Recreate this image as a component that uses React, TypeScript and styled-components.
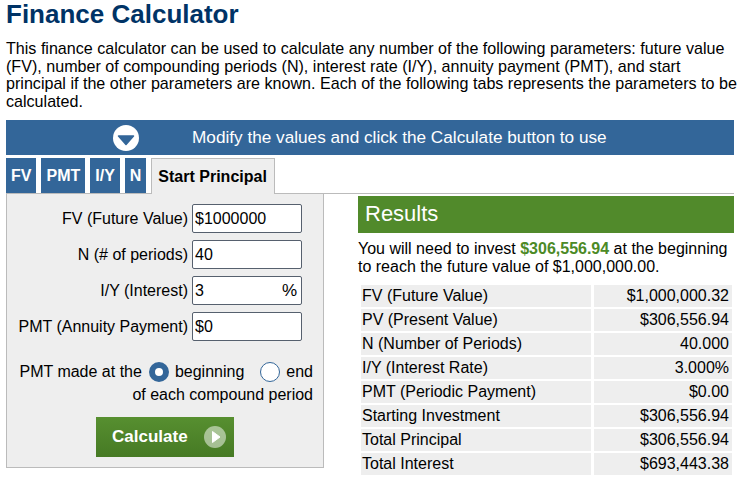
import React from 'react';
import styled, { createGlobalStyle, css } from 'styled-components';

const GlobalStyle = createGlobalStyle`
  html, body { margin: 0; padding: 0; background: #fff; }
  body { font-family: "Liberation Sans", Arial, sans-serif; color: #000; }
  * { box-sizing: border-box; }
`;

const Page = styled.div`
  width: 734px;
  padding-left: 6px;
`;

const Title = styled.h1`
  margin: 0;
  font-size: 26px;
  line-height: 29px;
  font-weight: bold;
  color: #003366;
`;

const Intro = styled.p`
  margin: 11px 0 0;
  font-size: 16.1px;
  line-height: 17.6px;
  white-space: nowrap;
`;

const Banner = styled.div`
  margin-top: 10px;
  height: 35px;
  background: #336699;
  display: flex;
  align-items: center;
  padding-left: 107px;
  gap: 53px;
  color: #fff;
  font-size: 17.2px;
`;

const TabRow = styled.div`
  margin-top: 3px;
  display: flex;
  align-items: flex-start;
  gap: 5px;
  height: 36px;
  border-bottom: 1px solid #bbb;
`;

const Tab = styled.div<{ $active?: boolean }>`
  height: 35px;
  line-height: 35px;
  padding: 0 5px;
  font-size: 16px;
  font-weight: bold;
  background: #336699;
  color: #fff;
  ${p =>
    p.$active &&
    css`
      background: #eee;
      color: #000;
      height: 36px;
      line-height: 35px;
      padding: 0 7px 0 6px;
      border: 1px solid #bbb;
      border-bottom: none;
      position: relative;
      z-index: 1;
    `}
`;

const Body = styled.div`
  display: flex;
  align-items: flex-start;
  gap: 34px;
`;

const Panel = styled.div`
  width: 318px;
  background: #eee;
  border: 1px solid #bbb;
  border-top: none;
  padding: 10px 10px 10px 0;
  font-size: 16px;
`;

const FormGrid = styled.div`
  display: grid;
  grid-template-columns: 181px 110px;
  column-gap: 4px;
  row-gap: 7px;
  align-items: center;
`;

const Label = styled.label`
  text-align: right;
  white-space: nowrap;
`;

const Field = styled.div`
  height: 29px;
  background: #fff;
  border: 1px solid #56606e;
  border-radius: 2px;
  display: flex;
  align-items: center;
  padding: 0 4px 0 2px;
`;

const Input = styled.input`
  flex: 1;
  min-width: 0;
  border: none;
  outline: none;
  padding: 0;
  background: transparent;
  font: 16px "Liberation Sans", Arial, sans-serif;
  color: #000;
`;

const Suffix = styled.span`
  font-size: 17px;
`;

const RadioBlock = styled.div`
  margin-top: 19px;
  line-height: 23px;
  text-align: right;
`;

const RadioLine = styled.div`
  display: flex;
  justify-content: flex-end;
  align-items: center;
  height: 23px;
`;

const Radio = styled.span<{ $checked?: boolean; $wide?: boolean }>`
  display: inline-block;
  width: 20px;
  height: 20px;
  border-radius: 50%;
  background: #fff;
  border: ${p => (p.$checked ? '6px solid #336699' : '1.5px solid #336699')};
  margin: 1px 6px 0 ${p => (p.$wide ? '16px' : '7px')};
`;

const ButtonWrap = styled.div`
  margin-top: 11px;
  display: flex;
  justify-content: center;
  padding-left: 10px;
`;

const CalcButton = styled.button`
  width: 138px;
  height: 40px;
  border: none;
  background: linear-gradient(#578f30, #467a24);
  color: #fff;
  font: bold 17px "Liberation Sans", Arial, sans-serif;
  display: flex;
  align-items: center;
  gap: 16px;
  padding: 0 0 0 16px;
  cursor: pointer;
`;

const ResultsCol = styled.div`
  width: 376px;
  margin-top: 2px;
`;

const ResultsHeader = styled.div`
  height: 37px;
  line-height: 35px;
  background: #518a2b;
  color: #fff;
  font-size: 22px;
  padding-left: 7px;
`;

const Summary = styled.p`
  margin: 7px 0 0;
  font-size: 16px;
  line-height: 18px;
`;

const Highlight = styled.b`
  color: #4c8a26;
`;

const ResultsTable = styled.table`
  margin-top: 7px;
  width: 377px;
  border-spacing: 3px 2px;
  font-size: 16px;
`;

const Cell = styled.td<{ $value?: boolean }>`
  height: 22px;
  line-height: 22px;
  padding: 0 ${p => (p.$value ? '3px' : '2px')} 0 ${p => (p.$value ? '2px' : '1px')};
  background: #eee;
  text-align: ${p => (p.$value ? 'right' : 'left')};
  width: ${p => (p.$value ? '138px' : '230px')};
  white-space: nowrap;
`;

const DownIcon = () => (
  <svg width="26" height="26" viewBox="0 0 26 26">
    <circle cx="13" cy="13" r="13" fill="#fff" />
    <polygon points="5.5,11 20.5,11 13,19.5" fill="#336699" stroke="#336699" strokeWidth="1.5" strokeLinejoin="round" />
  </svg>
);

const PlayIcon = () => (
  <svg width="22" height="22" viewBox="0 0 22 22">
    <circle cx="11" cy="11" r="11" fill="rgba(255,255,255,0.5)" />
    <polygon points="8.5,5.5 16,11 8.5,16.5" fill="#fff" stroke="#fff" strokeWidth="1" strokeLinejoin="round" />
  </svg>
);

const fields = [
  { label: 'FV (Future Value)', value: '$1000000' },
  { label: 'N (# of periods)', value: '40' },
  { label: 'I/Y (Interest)', value: '3', suffix: '%' },
  { label: 'PMT (Annuity Payment)', value: '$0' },
];

const results = [
  ['FV (Future Value)', '$1,000,000.32'],
  ['PV (Present Value)', '$306,556.94'],
  ['N (Number of Periods)', '40.000'],
  ['I/Y (Interest Rate)', '3.000%'],
  ['PMT (Periodic Payment)', '$0.00'],
  ['Starting Investment', '$306,556.94'],
  ['Total Principal', '$306,556.94'],
  ['Total Interest', '$693,443.38'],
];

const tabs = ['FV', 'PMT', 'I/Y', 'N', 'Start Principal'];

export default function App() {
  return (
    <Page>
      <GlobalStyle />
      <Title>Finance Calculator</Title>
      <Intro>
        This finance calculator can be used to calculate any number of the following parameters: future value
        <br />
        (FV), number of compounding periods (N), interest rate (I/Y), annuity payment (PMT), and start
        <br />
        principal if the other parameters are known. Each of the following tabs represents the parameters to be
        <br />
        calculated.
      </Intro>
      <Banner>
        <DownIcon />
        <span>Modify the values and click the Calculate button to use</span>
      </Banner>
      <TabRow>
        {tabs.map(t => (
          <Tab key={t} $active={t === 'Start Principal'}>
            {t}
          </Tab>
        ))}
      </TabRow>
      <Body>
        <Panel>
          <FormGrid>
            {fields.map(f => (
              <React.Fragment key={f.label}>
                <Label>{f.label}</Label>
                <Field>
                  <Input defaultValue={f.value} />
                  {f.suffix && <Suffix>{f.suffix}</Suffix>}
                </Field>
              </React.Fragment>
            ))}
          </FormGrid>
          <RadioBlock>
            <RadioLine>
              <span>PMT made at the</span>
              <Radio $checked />
              <span>beginning</span>
              <Radio $wide />
              <span>end</span>
            </RadioLine>
            <div>of each compound period</div>
          </RadioBlock>
          <ButtonWrap>
            <CalcButton>
              <span>Calculate</span>
              <PlayIcon />
            </CalcButton>
          </ButtonWrap>
        </Panel>
        <ResultsCol>
          <ResultsHeader>Results</ResultsHeader>
          <Summary>
            You will need to invest <Highlight>$306,556.94</Highlight> at the beginning to reach the future value of
            $1,000,000.00.
          </Summary>
          <ResultsTable>
            <tbody>
              {results.map(([k, v]) => (
                <tr key={k}>
                  <Cell>{k}</Cell>
                  <Cell $value>{v}</Cell>
                </tr>
              ))}
            </tbody>
          </ResultsTable>
        </ResultsCol>
      </Body>
    </Page>
  );
}
